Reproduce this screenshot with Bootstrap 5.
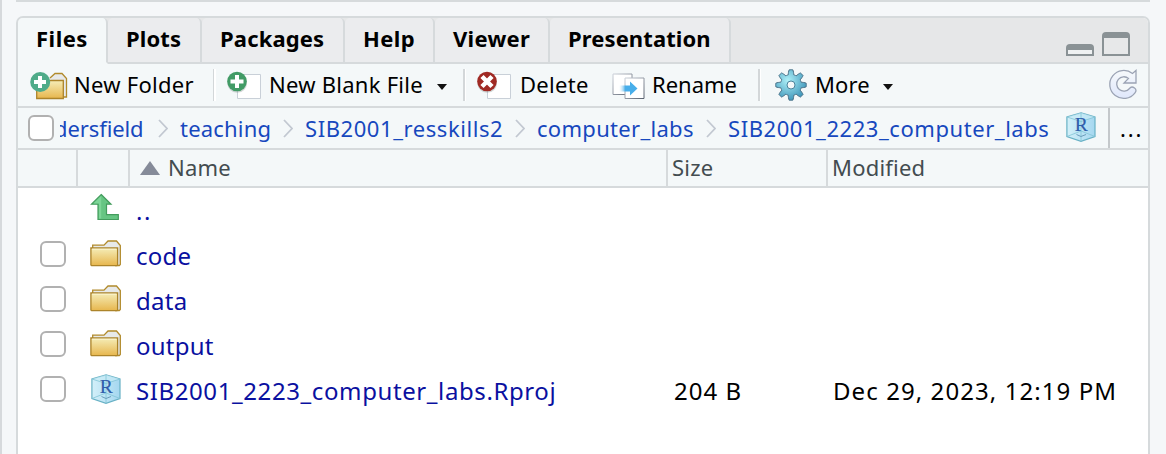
<!DOCTYPE html>
<html lang="en">
<head>
<meta charset="utf-8">
<title>Files</title>
<link rel="stylesheet" href="https://cdn.jsdelivr.net/npm/bootstrap@5.3.0/dist/css/bootstrap.min.css">
<style>
body{font:22px/30px "Noto Sans","Open Sans",sans-serif;color:#000;background:#f5f7f9;height:454px;overflow:hidden;border-left:2px solid #d6d9dc}
.splitter{height:2px;background:#d6dadc;margin:0 16px 14px 14px}
.pane{margin:0 16px 0 14px;height:450px;border:2px solid #d6dadc;border-radius:7px 7px 0 0;background:#fff;white-space:nowrap}
.tabs{height:46px;background:#e6e7e8;border-radius:5px 5px 0 0}
.tabs .nav-link{flex:none;height:46px;padding:5px 0 0;border:0;border-right:2px solid #d6dadc;border-bottom:2px solid #d6dadc;border-radius:5px 5px 0 0;background:#ebecee;color:#000;font-weight:700;text-indent:18px;line-height:30px}
.tabs .nav-link.active{background:#f4f8f9;border-bottom-color:#f4f8f9}
.t-files{width:90px;letter-spacing:.5px}.t-plots{width:94px;letter-spacing:.1px}.t-pack{width:143px;letter-spacing:.15px}
.t-help{width:90px;letter-spacing:.4px}.t-view{width:115px;letter-spacing:.3px}.t-pres{width:181px;letter-spacing:.1px}
.win{border-bottom:2px solid #d6dadc;padding:0 18px 6px 0;gap:8px}
.tools{height:44px;background:#f4f8f9;border-bottom:2px solid #d6dadc}
.tools svg,.crumbs svg{flex:none;display:block}
.tool{height:42px;flex:none}
.tool span{margin-top:-2px}
.tool-folder{width:195px;padding-left:12px}.tool-folder span{letter-spacing:.28px;margin-left:6px}
.tool-blank{width:247px;padding-left:11px}.tool-blank span{letter-spacing:.26px;margin-left:7px}
.tool-del{width:136px;padding-left:11px}.tool-del span{letter-spacing:.3px;margin-left:8px}
.tool-ren{width:156px;padding-left:10px}.tool-ren span{letter-spacing:0;margin-left:7px}
.tool-more{padding-left:14px}.tool-more span{letter-spacing:.1px;margin-left:6px}
.tool-blank svg,.tool-del svg{margin-top:2px}
.rule{width:3px;height:32px;flex:none;background:linear-gradient(90deg,#d3d7d9 0 1.5px,#fff 1.5px)}
.tri{width:0;height:0;border:5.5px solid transparent;border-top:6px solid #111;border-bottom:0;margin-top:4px}
.tool-more .tri{margin-left:13px}
.crumbs{height:42px;background:#f4f8f9;border-bottom:2px solid #d6dadc;padding-left:10px}
.crumbs .box{margin-top:1px}
.trail{width:1050px;height:40px;margin-left:6px;overflow:hidden;color:#1748be}
.trail svg{margin:1px 12px 0 13px}
.trail span{flex:none}
.c1{margin-left:-6px;width:91px;letter-spacing:-.1px}.c2{width:90px;letter-spacing:.2px}.c3{width:197px;letter-spacing:.57px}.c4{width:156px;letter-spacing:.3px}.c5{width:338px;letter-spacing:.56px}
.form-check-input.box{width:26px;height:26px;margin:0;border:2px solid #b1b1b1;border-radius:6px;background:#fff;flex:none}
.more{width:40px;height:40px;border-left:2px solid #c4c8cb;padding-left:10px;letter-spacing:1.8px}
.gridrow{display:grid;grid-template-columns:60px 52px 538px 160px 1fr;align-items:center}
.headrow{height:38px;background:#f4f8f9;border-bottom:2px solid #d6dadc;color:#434c50}
.headrow>div{height:36px;line-height:34px;border-right:2px solid #d6dadc;padding-left:4px;letter-spacing:.2px}
.headrow>div:last-child{border:0}
.headrow .nm{padding-left:10px}
.sort{display:inline-block;border:10px solid transparent;border-bottom:14px solid #858b99;border-top:0;margin:0 8px 1px 0}
.filerow{height:45px;font-size:24px}
.filerow .box{margin:-3px 0 0 22px}
.filerow svg{display:block;margin:-5px 0 0 12px}
.filerow .rp{margin:-3px 0 0 13px}
.filerow a{color:#0a10a0;text-decoration:none;padding-left:6px;letter-spacing:.6px}
.filerow a.up{letter-spacing:1.6px}
.filerow .sm{letter-spacing:.25px}
.filerow .sz{padding-left:6px;letter-spacing:1px}.filerow .dt{padding-left:5px;letter-spacing:1.08px}
</style>
</head>
<body>
<svg width="0" height="0" class="position-absolute">
<defs>
<linearGradient id="gold" x2="0" y2="1"><stop stop-color="#f5edb8"/><stop offset="1" stop-color="#e7b64d"/></linearGradient>
<linearGradient id="sky" x2="1"><stop stop-color="#cdeaf6" stop-opacity="0"/><stop offset=".35" stop-color="#48aeea"/></linearGradient>
<radialGradient id="gear"  cx=".4" cy=".35" r=".65"><stop stop-color="#aef0f8"/><stop offset="1" stop-color="#4298bb"/></radialGradient>
<linearGradient id="ice" x2="1"><stop stop-color="#d3f0f9"/><stop offset="1" stop-color="#a5d7f0"/></linearGradient>
<linearGradient id="mist" x2="0" y2="1"><stop stop-color="#f6f9fb"/><stop offset="1" stop-color="#dfe7fb"/></linearGradient>
<linearGradient id="edge" x2="1" y2="1"><stop stop-color="#ccd1d9"/><stop offset="1" stop-color="#59616f"/></linearGradient>
<symbol id="folder" viewBox="0 0 31 27">
<path d="M2.700 8V5.200H14L18 1h8.500l3.800 4.500V24.500l-1 1H25" fill="#e7e9e9" stroke="#b18a2b" stroke-width="1.300"/>
<path d="M.9 8h26.700v17l-.7.700H1.600L.9 25z" fill="url(#gold)" stroke="#ac842a" stroke-width="1.300"/><path d="M2 9.100h24.500" stroke="#fbf6d4"/>
</symbol>
<symbol id="cube" viewBox="0 0 30 30">
<path d="M15 .8 29 5v19.500L15 29.300.900 24.500V5z" fill="url(#ice)" stroke="#68b1c5" stroke-width="1.200"/>
<path d="M15 .8 29 5 15 9.300.900 5z" fill="#c9ecf7" fill-opacity=".6"/>
<path d="M1 5 15 9.500 29 5M15 1V29M1 24.500 15 19l14 5.500" fill="none" stroke="#81c4d5" stroke-width=".8"/>
<path d="M10.500 22.500 15 24.500l5-2" fill="none" stroke="#6b9dbb" stroke-width="1"/>
<text x="15.200" y="18.800" text-anchor="middle" font-family="Liberation Serif,serif" font-size="19.500" letter-spacing="0" fill="#2f5dab" stroke="#2f5dab" stroke-width=".2">R</text>
</symbol>
<symbol id="arrowr" viewBox="0 0 10 20"><path d="m1 1 8 8.500-8 8.500" fill="none" stroke="#c2c8d1" stroke-width="1.800"/></symbol>
</defs></svg>

<div class="splitter"></div>
<main class="pane">
<nav class="nav tabs flex-nowrap">
<a class="nav-link active t-files">Files</a><a class="nav-link t-plots">Plots</a><a class="nav-link t-pack">Packages</a><a class="nav-link t-help">Help</a><a class="nav-link t-view">Viewer</a><a class="nav-link t-pres">Presentation</a>
<div class="win flex-grow-1 d-flex justify-content-end align-items-end">
<svg width="28" height="12" viewBox="0 0 28 12"><path d="M0 12V4Q0 0 4 0h20q4 0 4 4v8z" fill="#8a9295"/><path d="M2 6h24v4H2z" fill="#eff1f2"/></svg>
<svg width="28" height="24" viewBox="0 0 28 24"><path d="M0 24V4Q0 0 4 0h20q4 0 4 4v20z" fill="#8a9295"/><path d="M2 6h24v16H2z" fill="#e7e8e9"/></svg>
</div>
</nav>

<div class="tools d-flex align-items-center">
<div class="tool tool-folder d-flex align-items-center">
<svg width="38" height="30" viewBox="0 0 38 30"><path d="M20 8 25 3.500h7L36.500 8.500v18.500h-4" fill="#e7e9e9" stroke="#b18a2b" stroke-width="1.300"/><path d="M6.700 10.500h26.600V28.500H6.700z" fill="url(#gold)" stroke="#ac842a" stroke-width="1.300"/><circle cx="10.200" cy="12" r="10" fill="#4fab89"/><path d="M10 6v12M4 12h12" stroke="#fff" stroke-width="4"/></svg>
<span>New Folder</span></div>
<div class="rule"></div>
<div class="tool tool-blank d-flex align-items-center">
<svg width="35" height="30" viewBox="0 0 35 30"><path d="M10.500 3.500h23v24h-23z" fill="#fff" stroke="#c9d0d8"/><circle cx="10.200" cy="12" r="9.800" fill="#8b9897" opacity=".4"/><circle cx="10" cy="10.500" r="9.800" fill="#429b66"/><path d="M10 4v13M3.500 10.500h13" stroke="#fff" stroke-width="4"/></svg>
<span>New Blank File</span><i class="tri ms-auto me-3"></i></div>
<div class="rule"></div>
<div class="tool tool-del d-flex align-items-center">
<svg width="35" height="30" viewBox="0 0 35 30"><path d="M10.500 3.500h23v24h-23z" fill="#fff" stroke="#c9d0d8"/><circle cx="10.200" cy="12" r="9.800" fill="#8b9897" opacity=".4"/><circle cx="10" cy="10.500" r="9.800" fill="#a02a24"/><path d="m5 5.500 10 10m0-10-10 10" stroke="#fff" stroke-width="4.500"/></svg>
<span>Delete</span></div>
<div class="tool tool-ren d-flex align-items-center">
<svg width="33" height="30" viewBox="0 0 33 30"><path d="M1 4h19v20.500H1z" fill="#fff" stroke="url(#edge)"/><path d="M13 8h19v20.500H13z" fill="#fff" stroke="url(#edge)"/><path d="M7 15.500h11v-4l7.500 7-7.500 7v-4H7z" fill="url(#sky)"/></svg>
<span>Rename</span></div>
<div class="rule"></div>
<div class="tool tool-more d-flex align-items-center flex-grow-1">
<svg width="34" height="34" viewBox="-16 -17 34 34"><path id="gearshape" stroke="#486f86" stroke-width="1" fill="url(#gear)"/><circle r="4" fill="#f5f8f9" stroke="#4c839c"/></svg>
<span>More</span><i class="tri"></i>
<svg class="ms-auto me-2" width="32" height="32" viewBox="1 1 32 32"><path d="M29 2.500V15H17l4.500-4.600a7.200 7.200 0 1 0 1 10.100q2-2.700 5-.5 2.700 2 .5 4.800A14 14 0 1 1 25.500 5.500z" fill="url(#mist)" stroke="#9ba3b4" stroke-width="1.300"/></svg>
</div>
</div>

<div class="crumbs d-flex align-items-center">
<input class="form-check-input box" type="checkbox">
<div class="trail d-flex align-items-center">
<span class="c1">dersfield</span><svg width="10" height="20"><use href="#arrowr"/></svg><span class="c2">teaching</span><svg width="10" height="20"><use href="#arrowr"/></svg><span class="c3">SIB2001_resskills2</span><svg width="10" height="20"><use href="#arrowr"/></svg><span class="c4">computer_labs</span><svg width="10" height="20"><use href="#arrowr"/></svg><span class="c5">SIB2001_2223_computer_labs</span><svg class="mx-0 mb-1" width="30" height="30"><use href="#cube"/></svg>
</div>
<div class="more ms-auto d-flex align-items-center">...</div>
</div>

<div class="gridrow headrow"><div></div><div></div><div class="nm"><i class="sort"></i>Name</div><div>Size</div><div>Modified</div></div>
<div class="gridrow filerow"><span></span><svg width="32" height="30" viewBox="1 1 32 30"><path d="M12.200 2.500 22 12.200h-4.500v10.500h11.800v4.800H9V12.200H2.500z" fill="#66c583" stroke="#439c5d" stroke-width="1.200"/><path d="M12.200 4v22.500H10V11.500H4.500z" fill="#7dd597"/></svg><a href="#" class="up">..</a></div>
<div class="gridrow filerow"><input class="form-check-input box" type="checkbox"><svg width="31" height="27"><use href="#folder"/></svg><a href="#" class="sm">code</a></div>
<div class="gridrow filerow"><input class="form-check-input box" type="checkbox"><svg width="31" height="27"><use href="#folder"/></svg><a href="#" class="sm">data</a></div>
<div class="gridrow filerow"><input class="form-check-input box" type="checkbox"><svg width="31" height="27"><use href="#folder"/></svg><a href="#" class="sm">output</a></div>
<div class="gridrow filerow"><input class="form-check-input box" type="checkbox"><svg class="rp" width="30" height="30"><use href="#cube"/></svg><a href="#">SIB2001_2223_computer_labs.Rproj</a><span class="sz">204 B</span><span class="dt">Dec 29, 2023, 12:19 PM</span></div>
</main>
<script src="https://cdn.jsdelivr.net/npm/bootstrap@5.3.0/dist/js/bootstrap.bundle.min.js"></script>
<script>
// Eight rounded gear teeth from a radial wave
let d = '';
for (let i = 0; i < 160; i++) {
  const a = i * Math.PI / 80, w = Math.max(-1, Math.min(1, 1.8 * Math.cos(8 * a))), r = 12.9 + 2.4 * w;
  d += (i ? 'L' : 'M') + (r * Math.cos(a)).toFixed(2) + ' ' + (r * Math.sin(a)).toFixed(2);
}
document.getElementById('gearshape').setAttribute('d', d + 'Z');
</script>
</body>
</html>
